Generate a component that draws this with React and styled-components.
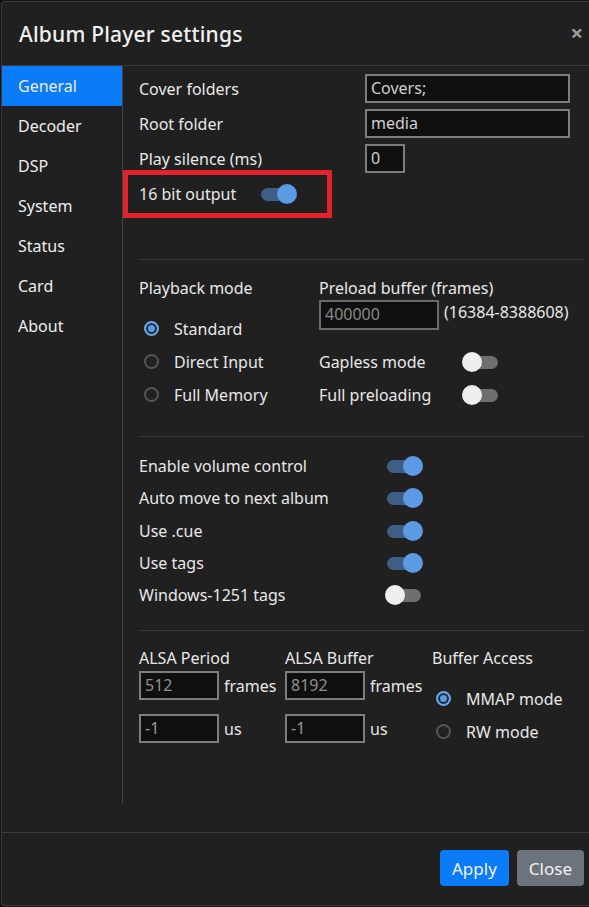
import styled, { createGlobalStyle } from 'styled-components';

const GlobalStyle = createGlobalStyle`
  html, body {
    margin: 0;
    padding: 0;
    background: #151313;
    overflow: hidden;
  }
  * {
    box-sizing: border-box;
  }
`;

const Backdrop = styled.div`
  width: 589px;
  height: 907px;
  padding: 1px 0 0 1px;
  overflow: hidden;
  font-family: "Noto Sans", "Open Sans", sans-serif;
  color: #e6e6e6;
`;

const Modal = styled.div`
  width: 596px;
  height: 905px;
  background: #202020;
  border: 1px solid #3c3a3a;
  border-radius: 4px;
  display: flex;
  flex-direction: column;
`;

const Header = styled.div`
  height: 64px;
  flex-shrink: 0;
  display: flex;
  align-items: center;
  justify-content: space-between;
  padding: 0 13px 0 17px;
  border-bottom: 1px solid #3a3a3a;
`;

const Title = styled.h1`
  margin: 0;
  font-size: 21px;
  font-weight: 500;
  color: #f0f0f0;
  letter-spacing: 0.2px;
`;

const CloseX = styled.span`
  font-size: 22px;
  font-weight: 700;
  color: #9a9a9a;
  line-height: 1;
  margin-top: -4px;
`;

const Body = styled.div`
  display: flex;
  height: 767px;
  padding-bottom: 28px;
  border-bottom: 1px solid #3a3a3a;
`;

const Sidebar = styled.nav`
  width: 121px;
  flex-shrink: 0;
  border-right: 1px solid #444;
  display: flex;
  flex-direction: column;
`;

const NavItem = styled.div`
  height: 40px;
  display: flex;
  align-items: center;
  padding-left: 16px;
  font-size: 16px;
  color: #ededed;
  background: ${p => (p.$active ? '#0a7cf7' : 'transparent')};
`;

const Content = styled.div`
  flex: 1;
  padding: 0 12px 0 16px;
`;

const Section = styled.div`
  padding-top: ${p => p.$top}px;
  padding-bottom: ${p => p.$bottom}px;
  border-bottom: ${p => (p.$last ? 'none' : '1px solid #3a3a3a')};
`;

const FieldGrid = styled.div`
  display: grid;
  grid-template-columns: 226px 205px;
  grid-auto-rows: 29px;
  row-gap: 6px;
  align-items: center;
`;

const Label = styled.span`
  font-size: 16px;
  line-height: 22px;
  color: #e8e8e8;
  white-space: nowrap;
`;

const Input = styled.div`
  width: ${p => p.$w || 205}px;
  height: ${p => p.$h || 29}px;
  background: #0f0f0f;
  border: 2px solid ${p => p.$border || '#7c7c7c'};
  color: ${p => p.$color || '#cfcfcf'};
  font-size: 16px;
  line-height: 24px;
  padding-left: 4px;
  white-space: nowrap;
`;

const Highlight = styled.div`
  width: 209px;
  height: 48px;
  margin: -3px 0 0 -16px;
  border: 5px solid #e3222b;
  padding-left: 11px;
  display: flex;
  align-items: center;
`;

const ToggleRow = styled.div`
  display: flex;
  align-items: center;
  height: ${p => p.$h || 32}px;
`;

const FixedLabel = styled(Label)`
  display: inline-block;
  width: ${p => p.$w}px;
`;

const ToggleWrap = styled.span`
  position: relative;
  display: inline-block;
  width: 38px;
  height: 20px;
  flex-shrink: 0;
`;

const Track = styled.span`
  position: absolute;
  top: 4px;
  left: 2px;
  width: 34px;
  height: 13px;
  border-radius: 7px;
  background: ${p => (p.$on ? '#3f5e86' : '#6e6e6e')};
`;

const Thumb = styled.span`
  position: absolute;
  top: 0;
  left: ${p => (p.$on ? '18px' : '0')};
  width: 20px;
  height: 20px;
  border-radius: 50%;
  background: ${p => (p.$on ? '#5b9be4' : '#efefef')};
`;

function Toggle({ on }) {
  return (
    <ToggleWrap>
      <Track $on={on} />
      <Thumb $on={on} />
    </ToggleWrap>
  );
}

const Columns = styled.div`
  display: flex;
`;

const Column = styled.div`
  width: ${p => (p.$w ? `${p.$w}px` : 'auto')};
  display: flex;
  flex-direction: column;
`;

const RadioRow = styled.div`
  display: flex;
  align-items: center;
  height: 33px;
  padding-left: ${p => p.$indent || 5}px;
`;

const RadioDot = styled.span`
  width: 15px;
  height: 15px;
  border-radius: 50%;
  flex-shrink: 0;
  margin-right: 15px;
  border: 2px solid ${p => (p.$on ? '#6aa6ea' : '#555')};
  background: ${p => (p.$on ? '#5a9ae3' : '#222')};
  box-shadow: ${p => (p.$on ? 'inset 0 0 0 2px #1d2a3a' : 'none')};
`;

function Radio({ on, children, indent }) {
  return (
    <RadioRow $indent={indent}>
      <RadioDot $on={on} />
      <Label>{children}</Label>
    </RadioRow>
  );
}

const InlineRow = styled.div`
  display: flex;
  align-items: center;
  gap: 5px;
  margin-top: ${p => p.$mt || 0}px;
`;

const Hint = styled(Label)`
  margin-top: -6px;
`;

const Spacer = styled.div`
  height: ${p => p.$h}px;
`;

const Footer = styled.div`
  flex: 1;
  display: flex;
  align-items: flex-start;
  justify-content: flex-end;
  gap: 8px;
  padding: 17px 12px 0 0;
`;

const Button = styled.button`
  height: 36px;
  padding: 0 12px;
  border: none;
  border-radius: 4px;
  font-family: inherit;
  font-size: 17px;
  color: #f2f2f2;
  background: ${p => (p.$primary ? '#0a7cf7' : '#6c737a')};
`;

const navItems = ['General', 'Decoder', 'DSP', 'System', 'Status', 'Card', 'About'];

const switches = [
  ['Enable volume control', true],
  ['Auto move to next album', true],
  ['Use .cue', true],
  ['Use tags', true],
  ['Windows-1251 tags', false],
];

export default function App() {
  return (
    <Backdrop>
      <GlobalStyle />
      <Modal>
        <Header>
          <Title>Album Player settings</Title>
          <CloseX>×</CloseX>
        </Header>
        <Body>
          <Sidebar>
            {navItems.map((n, i) => (
              <NavItem key={n} $active={i === 0}>{n}</NavItem>
            ))}
          </Sidebar>
          <Content>
            <Section $top={8} $bottom={41}>
              <FieldGrid>
                <Label>Cover folders</Label>
                <Input>Covers;</Input>
                <Label>Root folder</Label>
                <Input>media</Input>
                <Label>Play silence (ms)</Label>
                <Input $w={40}>0</Input>
              </FieldGrid>
              <Highlight>
                <FixedLabel $w={120}>16 bit output</FixedLabel>
                <Toggle on />
              </Highlight>
            </Section>

            <Section $top={17} $bottom={25}>
              <Columns>
                <Column $w={180}>
                  <Label>Playback mode</Label>
                  <Spacer $h={13} />
                  <Radio on>Standard</Radio>
                  <Radio>Direct Input</Radio>
                  <Radio>Full Memory</Radio>
                </Column>
                <Column>
                  <Label>Preload buffer (frames)</Label>
                  <InlineRow $mt={1}>
                    <Input $w={120} $h={30} $color="#8a8a8a" $border="#6a6a6a">400000</Input>
                    <Hint>(16384-8388608)</Hint>
                  </InlineRow>
                  <Spacer $h={15} />
                  <ToggleRow $h={33}>
                    <FixedLabel $w={143}>Gapless mode</FixedLabel>
                    <Toggle />
                  </ToggleRow>
                  <ToggleRow $h={33}>
                    <FixedLabel $w={143}>Full preloading</FixedLabel>
                    <Toggle />
                  </ToggleRow>
                </Column>
              </Columns>
            </Section>

            <Section $top={13} $bottom={19}>
              {switches.map(([label, on]) => (
                <ToggleRow key={label} $h={32.3}>
                  <FixedLabel $w={246}>{label}</FixedLabel>
                  <Toggle on={on} />
                </ToggleRow>
              ))}
            </Section>

            <Section $top={16} $bottom={0} $last>
              <Columns>
                <Column $w={146}>
                  <Label>ALSA Period</Label>
                  <InlineRow $mt={2}>
                    <Input $w={80} $h={29} $color="#8f8f8f">512</Input>
                    <Label>frames</Label>
                  </InlineRow>
                  <InlineRow $mt={14}>
                    <Input $w={80} $h={29} $color="#9a9a9a">-1</Input>
                    <Label>us</Label>
                  </InlineRow>
                </Column>
                <Column $w={147}>
                  <Label>ALSA Buffer</Label>
                  <InlineRow $mt={2}>
                    <Input $w={80} $h={29} $color="#8f8f8f">8192</Input>
                    <Label>frames</Label>
                  </InlineRow>
                  <InlineRow $mt={14}>
                    <Input $w={80} $h={29} $color="#9a9a9a">-1</Input>
                    <Label>us</Label>
                  </InlineRow>
                </Column>
                <Column>
                  <Label>Buffer Access</Label>
                  <Spacer $h={13} />
                  <Radio on indent={4}>MMAP mode</Radio>
                  <Radio indent={4}>RW mode</Radio>
                </Column>
              </Columns>
            </Section>
          </Content>
        </Body>
        <Footer>
          <Button $primary>Apply</Button>
          <Button>Close</Button>
        </Footer>
      </Modal>
    </Backdrop>
  );
}
